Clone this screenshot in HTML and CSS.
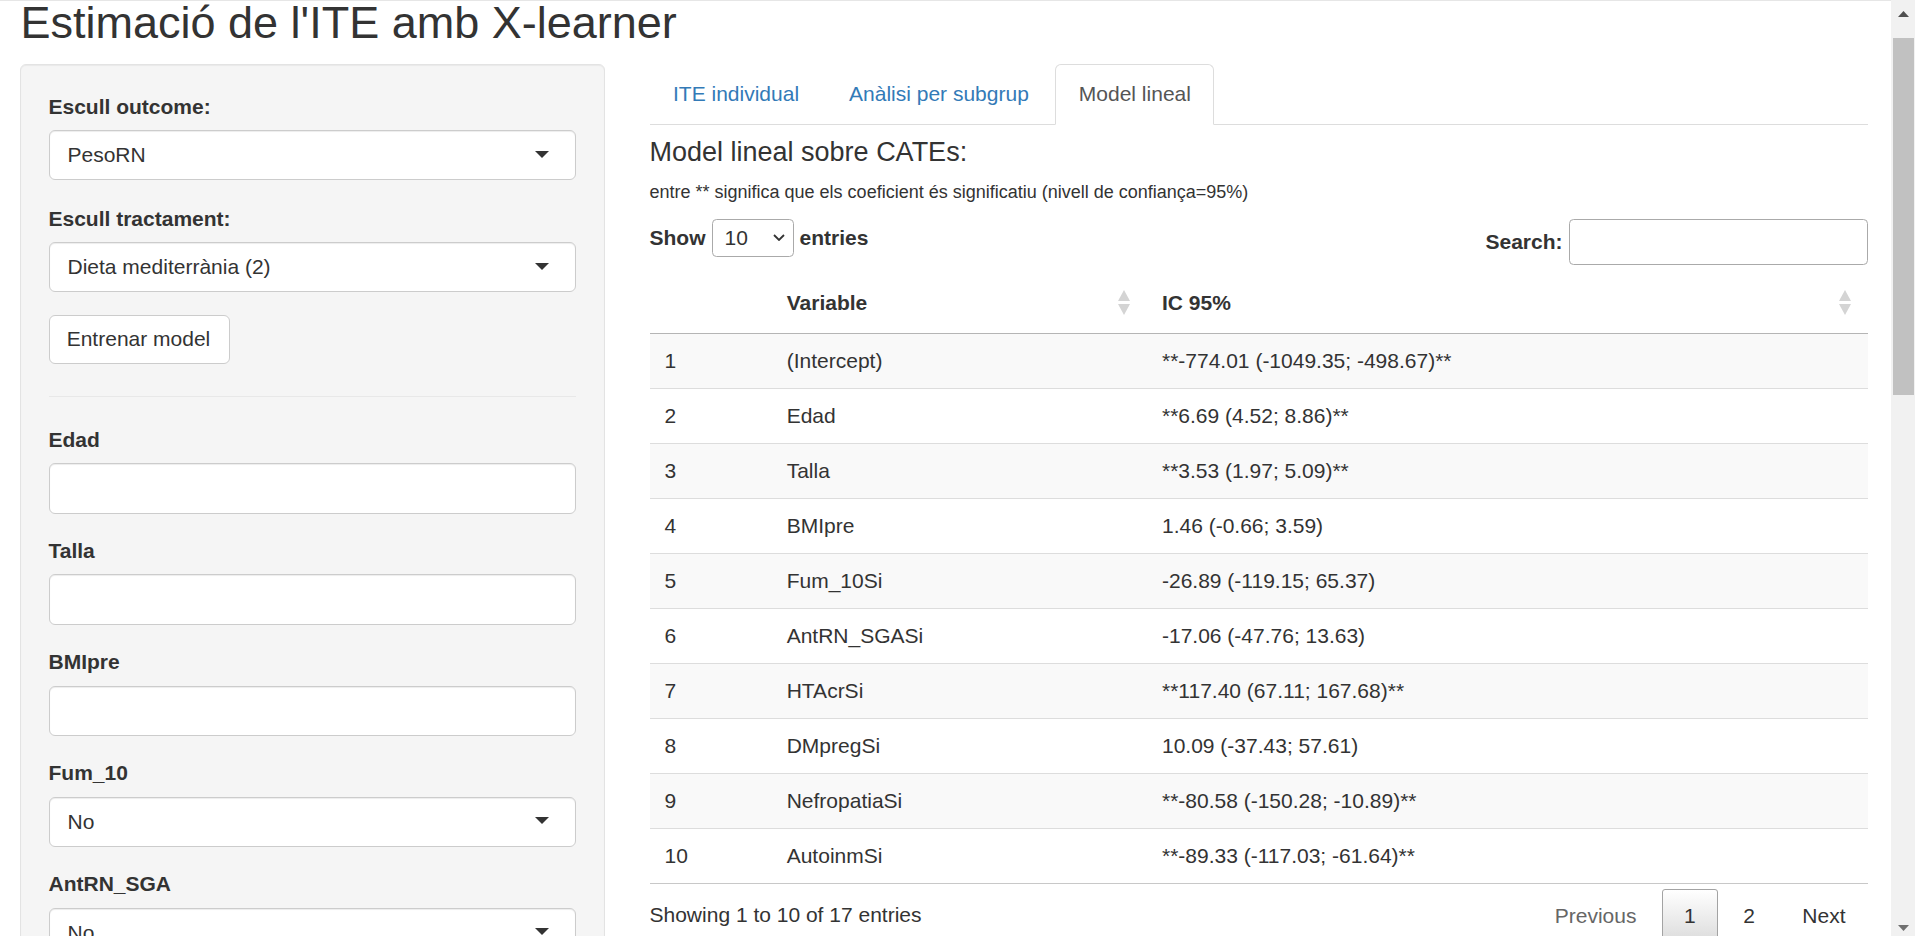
FILE: index.html
```html
<!DOCTYPE html>
<html lang="ca">
<head>
<meta charset="utf-8">
<title>Estimació de l'ITE amb X-learner</title>
<link rel="stylesheet" href="styles.css">
</head>
<body>
<div class="window">
  <div class="page">
    <h2 class="title">Estimació de l'ITE amb X-learner</h2>
    <div class="layout">
      <aside class="well">
        <div class="group group-first">
          <label class="ctl-label">Escull outcome:</label>
          <div class="selectize"><span class="value">PesoRN</span><span class="caret"></span></div>
        </div>
        <div class="group group-second">
          <label class="ctl-label">Escull tractament:</label>
          <div class="selectize"><span class="value">Dieta mediterrània (2)</span><span class="caret"></span></div>
        </div>
        <div class="btn-row"><button class="btn" type="button">Entrenar model</button></div>
        <hr class="sep">
        <div class="group">
          <label class="ctl-label">Edad</label>
          <input class="form-control" type="text">
        </div>
        <div class="group">
          <label class="ctl-label">Talla</label>
          <input class="form-control" type="text">
        </div>
        <div class="group">
          <label class="ctl-label">BMIpre</label>
          <input class="form-control" type="text">
        </div>
        <div class="group">
          <label class="ctl-label">Fum_10</label>
          <div class="selectize sel-small"><span class="value">No</span><span class="caret"></span></div>
        </div>
        <div class="group">
          <label class="ctl-label">AntRN_SGA</label>
          <div class="selectize sel-small"><span class="value">No</span><span class="caret"></span></div>
        </div>
      </aside>

      <main class="main">
        <ul class="tabs">
          <li><a href="#">ITE individual</a></li>
          <li><a href="#">Anàlisi per subgrup</a></li>
          <li class="active"><a href="#">Model lineal</a></li>
        </ul>
        <section class="pane">
          <h4 class="pane-title">Model lineal sobre CATEs:</h4>
          <p class="note">entre ** significa que els coeficient és significatiu (nivell de confiança=95%)</p>
          <div class="dt-toolbar">
            <div class="dt-length">
              <span>Show</span>
              <span class="len-select"><span>10</span><svg class="chev" width="12" height="7" viewBox="0 0 12 7"><polyline points="1,1 6,6 11,1" fill="none" stroke="#333" stroke-width="1.8"/></svg></span>
              <span>entries</span>
            </div>
            <div class="dt-filter">
              <span>Search:</span>
              <input class="search-input" type="search">
            </div>
          </div>
          <table class="dt">
            <colgroup><col class="c-idx"><col class="c-var"><col class="c-ic"></colgroup>
            <thead>
              <tr>
                <th></th>
                <th><div class="th-in"><span>Variable</span><svg class="sort" width="12" height="25" viewBox="0 0 12 25"><polygon points="0,11 6,0 12,11" fill="#d4d4d4"/><polygon points="0,14 12,14 6,25" fill="#d4d4d4"/></svg></div></th>
                <th><div class="th-in"><span>IC 95%</span><svg class="sort" width="12" height="25" viewBox="0 0 12 25"><polygon points="0,11 6,0 12,11" fill="#d4d4d4"/><polygon points="0,14 12,14 6,25" fill="#d4d4d4"/></svg></div></th>
              </tr>
            </thead>
            <tbody>
              <tr><td>1</td><td>(Intercept)</td><td>**-774.01 (-1049.35; -498.67)**</td></tr>
              <tr><td>2</td><td>Edad</td><td>**6.69 (4.52; 8.86)**</td></tr>
              <tr><td>3</td><td>Talla</td><td>**3.53 (1.97; 5.09)**</td></tr>
              <tr><td>4</td><td>BMIpre</td><td>1.46 (-0.66; 3.59)</td></tr>
              <tr><td>5</td><td>Fum_10Si</td><td>-26.89 (-119.15; 65.37)</td></tr>
              <tr><td>6</td><td>AntRN_SGASi</td><td>-17.06 (-47.76; 13.63)</td></tr>
              <tr><td>7</td><td>HTAcrSi</td><td>**117.40 (67.11; 167.68)**</td></tr>
              <tr><td>8</td><td>DMpregSi</td><td>10.09 (-37.43; 57.61)</td></tr>
              <tr><td>9</td><td>NefropatiaSi</td><td>**-80.58 (-150.28; -10.89)**</td></tr>
              <tr><td>10</td><td>AutoinmSi</td><td>**-89.33 (-117.03; -61.64)**</td></tr>
            </tbody>
          </table>
          <div class="dt-footer">
            <div class="dt-info">Showing 1 to 10 of 17 entries</div>
            <div class="dt-paging">
              <a class="pg disabled" href="#">Previous</a>
              <a class="pg current" href="#">1</a>
              <a class="pg" href="#">2</a>
              <a class="pg" href="#">Next</a>
            </div>
          </div>
        </section>
      </main>
    </div>
  </div>
  <div class="scrollbar">
    <div class="sb-up"><svg width="11" height="6" viewBox="0 0 11 6"><polygon points="0,6 5.5,0 11,6" fill="#505050"/></svg></div>
    <div class="sb-thumb"></div>
    <div class="sb-track"></div>
    <div class="sb-down"><svg width="11" height="6" viewBox="0 0 11 6"><polygon points="0,0 11,0 5.5,6" fill="#707070"/></svg></div>
  </div>
</div>
</body>
</html>
```
FILE: styles.css
```css
* { box-sizing: border-box; }

html, body {
  margin: 0;
  padding: 0;
}

body {
  font-family: "Liberation Sans", Arial, Helvetica, sans-serif;
  font-size: 21px;
  line-height: 30px;
  color: #333;
  background: #fff;
  overflow: hidden;
}

.window {
  display: flex;
  width: 1915px;
  height: 936px;
}

.page {
  flex: 1;
  min-width: 0;
  height: 936px;
  overflow: hidden;
  border-top: 1px solid #e6e6e6;
  padding: 0 23.5px 0 19.5px;
}

.title {
  margin: 0 0 18.5px 1px;
  font-size: 45px;
  line-height: 44px;
  font-weight: 400;
  color: #333;
}

.layout {
  display: grid;
  grid-template-columns: 585px minmax(0, 1fr);
  column-gap: 45px;
  align-items: start;
}

/* ---------- sidebar ---------- */
.well {
  background: #f5f5f5;
  border: 1px solid #e3e3e3;
  border-radius: 6px;
  padding: 27.5px 28px 30px;
  box-shadow: inset 0 1px 1px rgba(0, 0, 0, .05);
}

.group { margin-bottom: 22.6px; }
.group-first { margin-bottom: 24.2px; }
.group-second { margin-bottom: 23.1px; }

.ctl-label {
  display: block;
  font-weight: 700;
  margin-bottom: 8.3px;
}

.selectize {
  display: flex;
  align-items: center;
  height: 49.5px;
  padding: 0 25.5px 0 18px;
  background: #fff;
  border: 1px solid #ccc;
  border-radius: 6px;
  box-shadow: inset 0 1px 1px rgba(0, 0, 0, .075);
}
.selectize.sel-small { height: 50.2px; }

.selectize .value { flex: 1; }

.caret {
  width: 0;
  height: 0;
  border-left: 7.5px solid transparent;
  border-right: 7.5px solid transparent;
  border-top: 7.5px solid #333;
  margin-top: -2px;
}

.form-control {
  display: block;
  width: 100%;
  height: 50.2px;
  padding: 0 18px;
  font: inherit;
  color: #555;
  background: #fff;
  border: 1px solid #ccc;
  border-radius: 6px;
  box-shadow: inset 0 1px 1px rgba(0, 0, 0, .075);
}

.btn-row { display: flex; }

.btn {
  width: 181px;
  height: 49px;
  padding: 0 0 0 17.2px;
  text-align: left;
  white-space: nowrap;
  font: 21px/30px "Liberation Sans", Arial, Helvetica, sans-serif;
  color: #333;
  background: #fff;
  border: 1px solid #ccc;
  border-radius: 6px;
}

.sep {
  border: 0;
  border-top: 1px solid #e8e8e8;
  margin: 31.7px 0 28.5px;
}

/* ---------- main ---------- */
.tabs {
  display: flex;
  list-style: none;
  margin: 0;
  padding: 0;
  border-bottom: 1px solid #ddd;
}

.tabs li {
  margin: 0 3px -1px 0;
}

.tabs a {
  display: block;
  padding: 14.5px 22.5px;
  border: 1px solid transparent;
  border-radius: 6px 6px 0 0;
  color: #337ab7;
  text-decoration: none;
}

.tabs .active a {
  color: #555;
  background: #fff;
  border-color: #ddd;
  border-bottom-color: transparent;
}

.pane-title {
  margin: 13.6px 0 12.7px;
  font-size: 27px;
  line-height: 29.7px;
  font-weight: 400;
}

.note {
  margin: 0 0 12.7px;
  font-size: 18px;
  line-height: 25.7px;
}

.dt-toolbar {
  display: flex;
  justify-content: space-between;
  align-items: flex-start;
}

.dt-length,
.dt-filter {
  display: flex;
  align-items: center;
  gap: 6px;
  font-weight: 700;
}

.len-select {
  display: flex;
  align-items: center;
  justify-content: space-between;
  width: 82px;
  height: 37.7px;
  padding: 0 8px 0 12px;
  font-weight: 400;
  background: #fff;
  border: 1px solid #aaa;
  border-radius: 4.5px;
}

.search-input {
  width: 299px;
  height: 46px;
  padding: 0 8px;
  font: inherit;
  background: #fff;
  border: 1px solid #aaa;
  border-radius: 4.5px;
}

.dt {
  width: 100%;
  margin-top: 8px;
  table-layout: fixed;
  border-collapse: separate;
  border-spacing: 0;
}

.c-idx { width: 122.2px; }
.c-var { width: 375.3px; }

.dt th {
  padding: 15px 17px 15px 15px;
  text-align: left;
  font-weight: 700;
  border-bottom: 1px solid #b5b5b5;
}

.th-in {
  display: flex;
  align-items: center;
  justify-content: space-between;
}

.sort { flex: none; }

.dt td {
  padding: 12px 15px;
  border-bottom: 1px solid #ddd;
}

.dt tbody tr:nth-child(odd) td { background: #f9f9f9; }
.dt tbody tr:last-child td { border-bottom-color: #c8c8c8; }

.dt-footer {
  display: flex;
  justify-content: space-between;
  align-items: flex-start;
}

.dt-info { padding-top: 15.9px; }

.dt-paging {
  display: flex;
  padding-top: 5.3px;
}

.pg {
  display: block;
  margin-left: 3.5px;
  padding: 10.5px 21px;
  color: #333;
  text-decoration: none;
  border: 1px solid transparent;
  border-radius: 3px;
}

.pg.disabled { color: #666; }

.pg.current {
  border-color: #a3a3a3;
  background: linear-gradient(to bottom, #fff 0%, #dcdcdc 100%);
}

/* ---------- fake browser scrollbar ---------- */
.scrollbar {
  flex: none;
  width: 24px;
  height: 936px;
  background: #f1f1f1;
  display: flex;
  flex-direction: column;
}

.sb-up {
  height: 28px;
  display: flex;
  align-items: center;
  justify-content: center;
}

.sb-thumb {
  height: 357.3px;
  margin: 9.7px 1px 0 2px;
  background: #c1c1c1;
}

.sb-track { flex: 1; }

.sb-down {
  height: 16px;
  display: flex;
  align-items: center;
  justify-content: center;
}
```
